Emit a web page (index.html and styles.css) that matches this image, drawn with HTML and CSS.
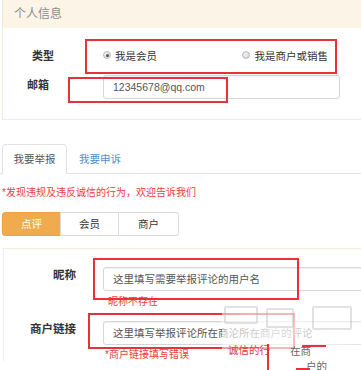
FILE: index.html
```html
<!DOCTYPE html>
<html lang="zh-CN">
<head>
<meta charset="utf-8">
<title>举报</title>
<link rel="stylesheet" href="styles.css">
</head>
<body>
<div class="page">
  <section class="panel info">
    <div class="panel-head">个人信息</div>
    <div class="panel-body">
      <div class="row">
        <label class="lbl lbl-type">类型</label>
        <div class="radios">
          <span class="opt"><span class="radio checked"></span>我是会员</span>
          <span class="opt opt2"><span class="radio"></span>我是商户或销售</span>
        </div>
      </div>
      <div class="row">
        <label class="lbl lbl-mail">邮箱</label>
        <div class="input mail">12345678@qq.com</div>
      </div>
    </div>
  </section>

  <nav class="tabs">
    <span class="tab active">我要举报</span>
    <span class="tab link">我要申诉</span>
  </nav>

  <p class="notice">*发现违规及违反诚信的行为，欢迎告诉我们</p>

  <div class="seg">
    <span class="seg-btn on">点评</span>
    <span class="seg-btn">会员</span>
    <span class="seg-btn">商户</span>
  </div>

  <section class="panel report">
    <div class="frow">
      <label class="flbl">昵称</label>
      <div class="field">
        <div class="input wide">这里填写需要举报评论的用户名</div>
        <div class="err err-nick">昵称不存在</div>
      </div>
    </div>
    <div class="frow">
      <label class="flbl">商户链接</label>
      <div class="field">
        <div class="input wide">这里填写举报评论所在商沦所在商户的评论</div>
        <div class="err">*商户链接填写错误</div>
      </div>
    </div>
  </section>

  <div class="mark m1"></div>
  <div class="mark m2"></div>
  <div class="mark m3"></div>
  <div class="mark m4"></div>

  <div class="wm">
    <span class="wm-box b1"></span>
    <span class="wm-box b2"></span>
    <span class="wm-box b3"></span>
    <span class="wm-red">诚信的行</span>
    <span class="wm-txt t1">在商</span>
    <span class="wm-txt t2">户的</span>
    <span class="wm-line l1"></span>
    <span class="wm-line l2"></span>
    <span class="wm-line l3"></span>
  </div>
</div>
</body>
</html>
```

FILE: styles.css
```css
html, body {
  margin: 0;
  padding: 0;
  background: #fff;
  overflow: hidden;
}
body {
  font-family: "Liberation Sans", "Noto Sans CJK SC", sans-serif;
  font-size: 10.5px;
  color: #333;
}
.page {
  position: relative;
  width: 361px;
  height: 370px;
  overflow: hidden;
}

/* ---------- top panel ---------- */
.panel.info {
  margin-left: 2px;
  border-left: 1px solid #efe9dc;
  border-bottom: 1px solid #ececec;
}
.panel-head {
  height: 28px;
  line-height: 28px;
  padding-left: 11px;
  background: #fcf5e7;
  color: #8c8c8c;
  font-size: 12px;
}
.panel-body {
  padding: 15px 0 20px;
  display: flex;
  flex-direction: column;
  gap: 8px;
}
.row {
  display: flex;
  align-items: center;
  height: 24px;
}
.lbl {
  flex: none;
  width: 100px;
  box-sizing: border-box;
  text-align: right;
  font-weight: bold;
  font-size: 11px;
  color: #333;
}
.lbl-type { padding-right: 49px; }
.lbl-mail { padding-right: 54px; margin-bottom: 6px; }

.radios {
  width: 237px;
  box-sizing: border-box;
  padding-right: 12px;
  display: flex;
  align-items: center;
  color: #333;
}
.opt {
  display: inline-flex;
  align-items: center;
  gap: 4px;
}
.opt2 { margin-left: auto; gap: 5px; }
.radio {
  width: 8px;
  height: 8px;
  box-sizing: border-box;
  border-radius: 50%;
  border: 1px solid #b9b9b9;
  background: radial-gradient(circle at 40% 35%, #f4f4f4, #cfcfcf);
  position: relative;
}
.radio.checked::after {
  content: "";
  position: absolute;
  left: 1.5px;
  top: 1.5px;
  width: 3px;
  height: 3px;
  border-radius: 50%;
  background: #555;
}

.input {
  flex: none;
  height: 24px;
  line-height: 22px;
  box-sizing: border-box;
  border: 1px solid #d6d6d6;
  border-radius: 3px;
  padding-left: 9px;
  color: #555;
  background: #fff;
  box-shadow: inset 0 1px 1px rgba(0, 0, 0, 0.06);
  white-space: nowrap;
  overflow: hidden;
}
.input.mail { width: 237px; }

/* ---------- tabs ---------- */
.tabs {
  margin-top: 24px;
  display: flex;
  padding-left: 2px;
  border-bottom: 1px solid #e2e2e2;
  height: 29px;
}
.tab {
  height: 29px;
  line-height: 28px;
  box-sizing: border-box;
  border: 1px solid transparent;
  border-radius: 4px 4px 0 0;
  padding: 0 10.5px;
}
.tab.active {
  border-color: #e2e2e2;
  border-bottom-color: #fff;
  background: #fff;
  color: #555;
  height: 30px;
}
.tab.link {
  margin-left: 1px;
  padding: 0 10px;
  color: #4b8fd3;
}

.notice {
  margin: 12px 0 0 2px;
  font-size: 10px;
  line-height: 14px;
  color: #ee3b3b;
}

/* ---------- segmented buttons ---------- */
.seg {
  margin: 12px 0 0 2px;
  display: flex;
}
.seg-btn {
  height: 24px;
  line-height: 22px;
  box-sizing: border-box;
  border: 1px solid #d9d9d9;
  text-align: center;
  color: #333;
  background: #fff;
  width: 59px;
}
.seg-btn + .seg-btn { margin-left: -1px; }
.seg-btn:nth-child(2) { width: 59px; }
.seg-btn:nth-child(3) { width: 61px; border-radius: 0 3px 3px 0; }
.seg-btn.on {
  background: #efab4d;
  border-color: #eba445;
  color: #fff;
  border-radius: 3px 0 0 3px;
}

/* ---------- report panel ---------- */
.panel.report {
  margin: 12px 0 0 3px;
  border-top: 1px solid #f5eddb;
  border-left: 1px solid #eeeeee;
  padding-top: 18px;
  display: flex;
  flex-direction: column;
  gap: 13px;
}
.frow {
  display: flex;
  align-items: flex-start;
}
.flbl {
  flex: none;
  width: 99px;
  box-sizing: border-box;
  padding-right: 27px;
  text-align: right;
  font-weight: bold;
  font-size: 11.5px;
  line-height: 16px;
  white-space: nowrap;
  color: #333;
}
.field {
  flex: none;
  display: flex;
  flex-direction: column;
}
.input.wide { width: 300px; }
.err {
  margin-top: 4px;
  padding-left: 2px;
  font-size: 10px;
  line-height: 12px;
  color: #ee3b3b;
}
.err-nick { margin-top: 5px; padding-left: 5px; }

/* ---------- red annotation boxes ---------- */
.mark {
  position: absolute;
  border: 2px solid #e8323a;
  box-sizing: border-box;
}
.m1 { left: 85px; top: 39px; width: 252px; height: 35px; }
.m2 { left: 68px; top: 77px; width: 160px; height: 26px; }
.m3 { left: 93px; top: 258px; width: 206px; height: 42px; }
.m4 { left: 88px; top: 313px; width: 207px; height: 36px; }

/* ---------- stamped watermark fragment ---------- */
.wm {
  position: absolute;
  left: 222px;
  top: 304px;
  width: 139px;
  height: 66px;
  background: radial-gradient(ellipse at 40% 40%, rgba(255,255,255,0.8), rgba(255,255,255,0.5) 60%, rgba(255,255,255,0) 100%);
}
.wm-box {
  position: absolute;
  border: 2px solid rgba(170, 170, 170, 0.35);
  border-radius: 2px;
}
.b1 { left: 2px; top: 2px; width: 30px; height: 14px; }
.b2 { left: 44px; top: 4px; width: 24px; height: 16px; }
.b3 { left: 90px; top: 2px; width: 36px; height: 20px; }
.wm-red {
  position: absolute;
  left: 6px;
  top: 38px;
  font-size: 10.5px;
  color: #e8323a;
}
.wm-txt {
  position: absolute;
  font-size: 10.5px;
  color: #666;
}
.t1 { left: 68px; top: 39px; }
.t2 { left: 84px; top: 54px; }
.wm-line {
  position: absolute;
  background: #e8323a;
}
.l1 { left: 45px; top: 40px; width: 2px; height: 26px; }
.l2 { left: 80px; top: 41px; width: 24px; height: 2px; }
.l3 { left: 74px; top: 64px; width: 14px; height: 2px; }
```
